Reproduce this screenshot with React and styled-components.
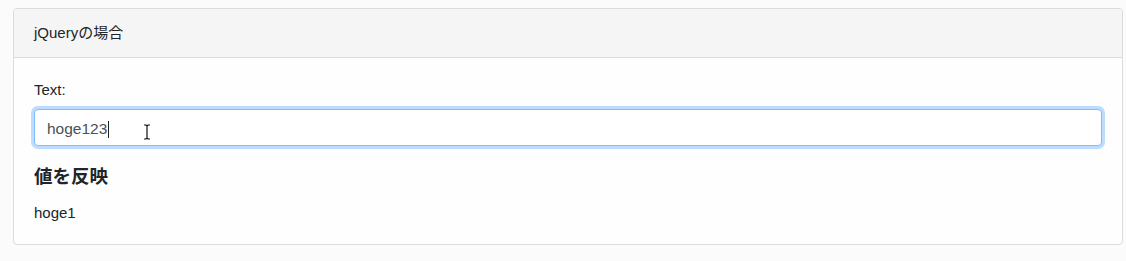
import React from 'react';
import styled, { createGlobalStyle } from 'styled-components';

const GlobalStyle = createGlobalStyle`
  html, body {
    margin: 0;
    background: #fbfbfb;
  }
  body {
    font-family: "Liberation Sans", "Noto Sans CJK JP", sans-serif;
    font-size: 15px;
    color: #212529;
  }
`;

const Page = styled.div`
  padding: 8px 3px 16px 13px;
`;

const Card = styled.div`
  display: flex;
  flex-direction: column;
  background: #fefefe;
  border: 1px solid #dcdcdc;
  border-radius: 4px;
`;

const CardHeader = styled.div`
  padding: 12px 20px;
  line-height: 24px;
  background: #f5f5f5;
  border-bottom: 1px solid #dcdcdc;
  border-radius: 3px 3px 0 0;
`;

const CardBody = styled.div`
  display: flex;
  flex-direction: column;
  padding: 20px 20px 19px;
`;

const Label = styled.label`
  line-height: 24px;
  margin-bottom: 7px;
`;

const FieldWrap = styled.div`
  position: relative;
  margin-bottom: 20px;
`;

const TextBox = styled.div`
  display: flex;
  align-items: center;
  height: 37px;
  box-sizing: border-box;
  padding: 3px 12px 0;
  border: 1px solid #80bdff;
  border-radius: 4px;
  background: #fff;
  box-shadow: 0 0 0 3px rgba(0, 123, 255, 0.25);
  color: #495057;
  font-size: 15.5px;
`;

const Caret = styled.span`
  display: inline-block;
  width: 1px;
  height: 17px;
  margin-left: 1px;
  background: #222;
`;

const Pointer = styled.svg`
  position: absolute;
  left: 109px;
  top: 15px;
`;

const Heading = styled.h5`
  margin: 0 0 14px;
  font-size: 18.5px;
  font-weight: 700;
  line-height: 21px;
`;

const Output = styled.p`
  margin: 0;
  line-height: 24px;
`;

const App = () => {
  return (
    <Page>
      <GlobalStyle />
      <Card>
        <CardHeader>jQueryの場合</CardHeader>
        <CardBody>
          <Label>Text:</Label>
          <FieldWrap>
            <TextBox>
              hoge123<Caret />
            </TextBox>
            <Pointer width="8" height="16" viewBox="0 0 8 16">
              <path d="M1 1h2l1 1 1-1h2M4 2v12M1 15h2l1-1 1 1h2" fill="none" stroke="#111" strokeWidth="1.2" />
            </Pointer>
          </FieldWrap>
          <Heading>値を反映</Heading>
          <Output>hoge1</Output>
        </CardBody>
      </Card>
    </Page>
  );
};

export default App;
